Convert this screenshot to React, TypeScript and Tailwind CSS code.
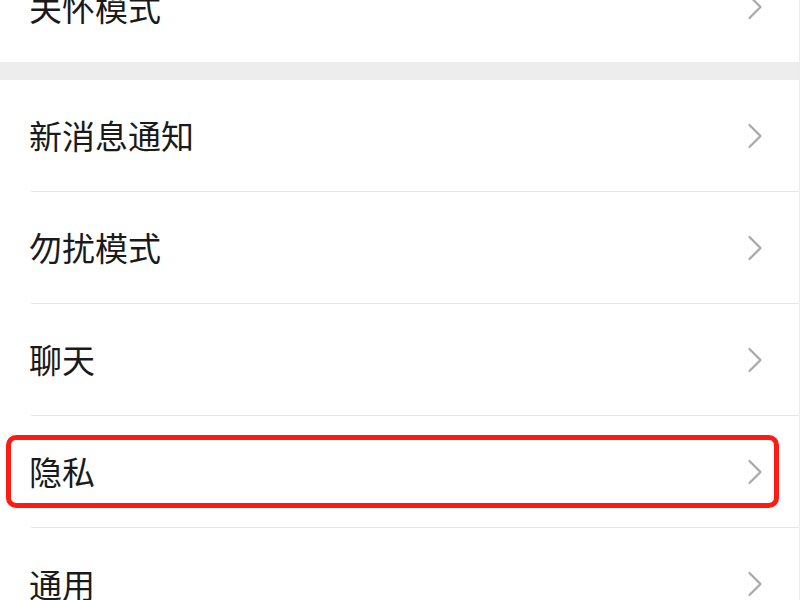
const Chevron = () => (
  <svg width="16" height="26" viewBox="0 0 16 26" fill="none" className="shrink-0">
    <polyline points="2.5,2 13.5,13 2.5,24" stroke="#a8a8a8" strokeWidth="2.2" strokeLinecap="round" strokeLinejoin="round" />
  </svg>
);

function Row({ label, last, highlight }: { label: string; last?: boolean; highlight?: boolean }) {
  return (
    <div className="relative h-[112px] pl-[31px]">
      <div className={`flex h-full items-center pr-[36px] ${last ? '' : 'border-b border-[#e6e6e6]'}`}>
        <span className="-ml-[2px] flex-1 text-[33px] leading-none text-[#1a1a1a]">{label}</span>
        <Chevron />
      </div>
      {highlight && (
        <div className="pointer-events-none absolute left-[6px] top-[19px] h-[73px] w-[773px] rounded-[10px] border-[5px] border-[#ff1b12]" />
      )}
    </div>
  );
}

export default function App() {
  return (
    <div
      className="h-[600px] w-[800px] overflow-hidden border-r border-[#ececec] bg-white"
      style={{ fontFamily: '"Noto Sans CJK SC", "Noto Sans", sans-serif' }}
    >
      {/* 上一组 */}
      <div className="-mt-[48px]">
        <div className="h-[110px] pl-[31px]">
          <div className="flex h-full items-center pr-[36px]">
            <span className="-ml-[2px] flex-1 text-[33px] leading-none text-[#1a1a1a]">关怀模式</span>
            <Chevron />
          </div>
        </div>
      </div>

      <div className="h-[18px] bg-[#ededed]" />

      {/* 设置列表 */}
      <div>
        <Row label="新消息通知" />
        <Row label="勿扰模式" />
        <Row label="聊天" />
        <Row label="隐私" highlight />
        <Row label="通用" last />
      </div>
    </div>
  );
}
